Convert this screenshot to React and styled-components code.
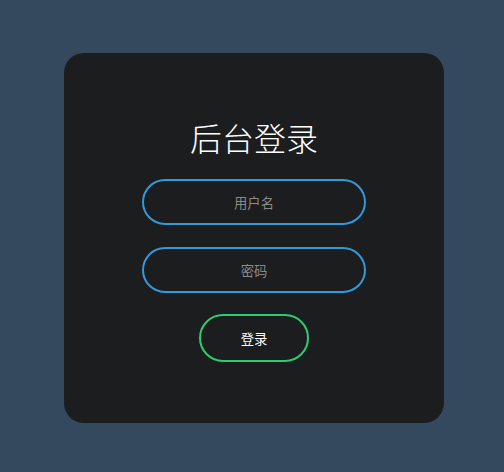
import React from 'react';
import styled, { createGlobalStyle } from 'styled-components';

const GlobalStyle = createGlobalStyle`
  html, body {
    margin: 0;
    padding: 0;
    background: #34495e;
    font-family: "Liberation Sans", "Noto Sans CJK SC", sans-serif;
  }
`;

const Page = styled.div`
  width: 504px;
  height: 472px;
  display: flex;
  align-items: flex-start;
  justify-content: center;
  padding: 53px 0 0 4px;
  box-sizing: border-box;
`;

const Card = styled.form`
  width: 380px;
  height: 370px;
  box-sizing: border-box;
  padding: 40px;
  background: #1b1d1f;
  border-radius: 20px;
  display: flex;
  flex-direction: column;
  align-items: center;
`;

const Title = styled.h1`
  margin: 22px 0 20px;
  font-size: 32px;
  line-height: 44px;
  font-weight: 300;
  color: #fff;
  font-family: "Noto Sans CJK SC", sans-serif;
`;

const Field = styled.input`
  width: 224px;
  height: 46px;
  box-sizing: border-box;
  margin-bottom: ${p => p.$gap}px;
  border: 2px solid #3498db;
  border-radius: 24px;
  background: none;
  outline: none;
  text-align: center;
  color: #fff;
  font-size: 13.33px;
  font-family: "Noto Sans CJK SC", sans-serif;

  &::placeholder {
    color: #8a8a8a;
  }
`;

const Submit = styled.button`
  width: 110px;
  height: 48px;
  border: 2px solid #2ecc71;
  border-radius: 24px;
  background: none;
  color: #fff;
  font-size: 13.33px;
  font-family: "Noto Sans CJK SC", sans-serif;
  cursor: pointer;
`;

export default function App() {
  return (
    <Page>
      <GlobalStyle />
      <Card onSubmit={e => e.preventDefault()}>
        <Title>后台登录</Title>
        <Field type="text" placeholder="用户名" $gap={22} />
        <Field type="password" placeholder="密码" $gap={21} />
        <Submit type="submit">登录</Submit>
      </Card>
    </Page>
  );
}
